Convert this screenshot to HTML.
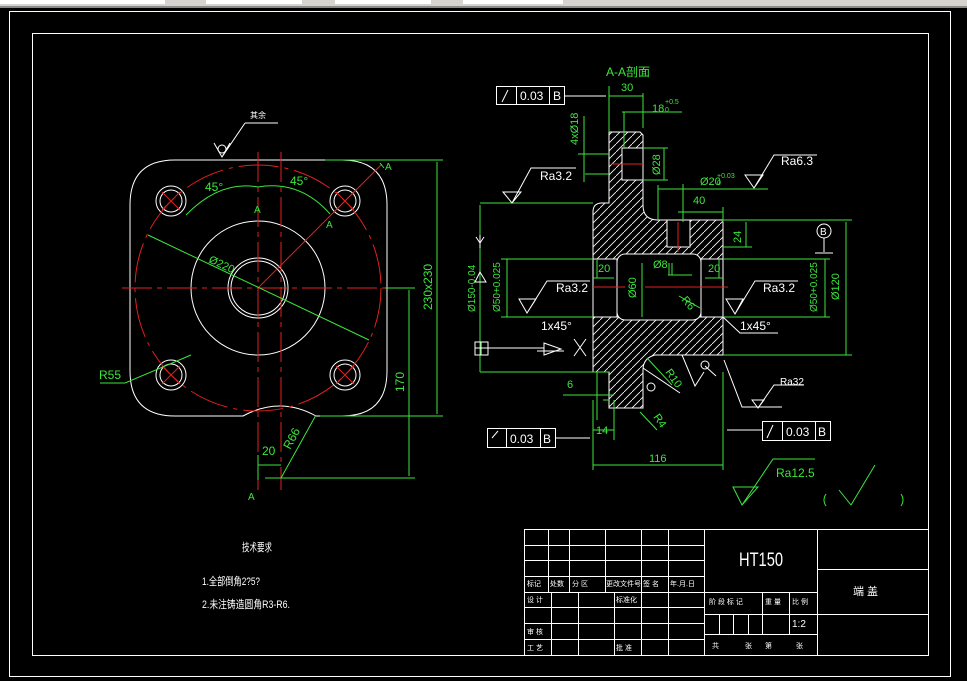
<!DOCTYPE html>
<html><head><meta charset="utf-8"><style>
html,body{margin:0;padding:0;background:#000;width:967px;height:681px;overflow:hidden}
svg{display:block}
text{font-family:"Liberation Sans","Noto Sans CJK SC",sans-serif}
</style></head><body>
<svg width="967" height="681" viewBox="0 0 967 681" xmlns="http://www.w3.org/2000/svg">
<defs>
<pattern id="h" patternUnits="userSpaceOnUse" width="8" height="8"><line x1="-1" y1="9" x2="9" y2="-1" stroke="#fff" stroke-width="0.8"/></pattern>
</defs>
<rect width="967" height="681" fill="#000"/>
<!-- toolbar -->
<rect x="0" y="0" width="967" height="7" fill="#d6d3ce"/>
<rect x="0" y="6" width="967" height="2" fill="#8a8a8a"/>
<rect x="0" y="0" width="165" height="4" fill="#fff"/>
<rect x="206" y="0" width="96" height="4" fill="#fff"/>
<rect x="335" y="0" width="96" height="4" fill="#fff"/>
<rect x="463" y="0" width="100" height="4" fill="#fff"/>
<g fill="none" stroke-width="1" shape-rendering="crispEdges">
<rect x="9.5" y="11.5" width="941" height="665" stroke="#fff"/>
<rect x="32.5" y="33.5" width="896" height="622" stroke="#fff"/>
<!-- title block -->
<g stroke="#fff">
<rect x="524.5" y="529.5" width="404" height="126"/>
<line x1="704.5" y1="529" x2="704.5" y2="655"/><line x1="817.5" y1="529" x2="817.5" y2="655"/>
<line x1="524" y1="545.5" x2="704" y2="545.5"/><line x1="524" y1="560.5" x2="704" y2="560.5"/>
<line x1="524" y1="576.5" x2="704" y2="576.5"/><line x1="524" y1="592.5" x2="817" y2="592.5"/>
<line x1="524" y1="607.5" x2="704" y2="607.5"/><line x1="524" y1="623.5" x2="704" y2="623.5"/>
<line x1="524" y1="639.5" x2="704" y2="639.5"/>
<line x1="548.5" y1="529" x2="548.5" y2="592"/><line x1="569.5" y1="529" x2="569.5" y2="592"/>
<line x1="605.5" y1="529" x2="605.5" y2="592"/><line x1="641.5" y1="529" x2="641.5" y2="655"/>
<line x1="668.5" y1="529" x2="668.5" y2="655"/>
<line x1="551.5" y1="592" x2="551.5" y2="655"/><line x1="578.5" y1="592" x2="578.5" y2="655"/>
<line x1="614.5" y1="592" x2="614.5" y2="655"/>
<line x1="704" y1="614.5" x2="817" y2="614.5"/><line x1="704" y1="634.5" x2="817" y2="634.5"/>
<line x1="762.5" y1="592" x2="762.5" y2="634"/><line x1="789.5" y1="592" x2="789.5" y2="634"/>
<line x1="719.5" y1="614" x2="719.5" y2="634"/><line x1="733.5" y1="614" x2="733.5" y2="634"/><line x1="748.5" y1="614" x2="748.5" y2="634"/>
<line x1="817" y1="569.5" x2="928" y2="569.5"/><line x1="817" y1="614.5" x2="928" y2="614.5"/>
</g>
</g>
<g fill="#fff" font-size="7">
<text x="527" y="586">标记</text><text x="550" y="586">处数</text><text x="572" y="586">分 区</text><text x="606" y="586">更改文件号</text><text x="643" y="586">签 名</text><text x="670" y="586">年.月.日</text>
<text x="527" y="602">设 计</text><text x="616" y="602">标准化</text><text x="527" y="634">审 核</text><text x="527" y="650">工 艺</text><text x="616" y="650">批 准</text>
<text x="709" y="604">阶 段 标 记</text><text x="765" y="604">重 量</text><text x="792" y="604">比 例</text>
<text x="712" y="648">共</text><text x="745" y="648">张</text><text x="765" y="648">第</text><text x="796" y="648">张</text>
<text x="792" y="627" font-size="10">1:2</text>
<text x="853" y="595" font-size="11">端 盖</text>
</g>
<text x="739" y="566" fill="#fff" font-size="19" textLength="44" lengthAdjust="spacingAndGlyphs">HT150</text>
<g fill="#fff" font-size="11">
<text x="242" y="551" textLength="30" lengthAdjust="spacingAndGlyphs">技术要求</text>
<text x="202" y="585" textLength="58" lengthAdjust="spacingAndGlyphs">1.全部倒角2?5?</text>
<text x="202" y="608" textLength="88" lengthAdjust="spacingAndGlyphs">2.未注铸造圆角R3-R6.</text>
</g>

<!-- LEFT VIEW -->
<g fill="none" stroke="#fff" stroke-width="1">
<path d="M175,160 L342,160 Q387,160 387,205 L387,371 Q387,416 342,416 L316,416 Q280,396 243,416 L175,416 Q130,416 130,371 L130,205 Q130,160 175,160 Z"/>
<circle cx="258" cy="288" r="67"/><circle cx="258" cy="288" r="30"/><circle cx="258" cy="288" r="27"/>
<circle cx="171" cy="201" r="15"/><circle cx="171" cy="201" r="11"/>
<circle cx="345" cy="201" r="15"/><circle cx="345" cy="201" r="11"/>
<circle cx="171" cy="375" r="15"/><circle cx="171" cy="375" r="11"/>
<circle cx="345" cy="375" r="15"/><circle cx="345" cy="375" r="11"/>
<path d="M245,123 L278,123 M245,123 L222,157 M214,143 L222,157 L230,143"/><circle cx="222" cy="149" r="4"/>
</g>
<text x="250" y="118" fill="#fff" font-size="8">其余</text>
<g fill="none" stroke="#e02020" stroke-width="1">
<circle cx="258" cy="288" r="123" stroke-dasharray="40 6 4 6"/>
<path d="M122,288 L385,288 M258,152 L258,490 M281,152 L281,490" stroke-dasharray="30 5 5 5"/>
<path d="M162,192 L180,210 M180,192 L162,210 M336,192 L354,210 M354,192 L336,210 M162,366 L180,384 M180,366 L162,384 M336,366 L354,384 M354,366 L336,384"/>
<path d="M258,288 L382,164"/>
</g>
<g fill="none" stroke="#3ce63c" stroke-width="1">
<path d="M325,160 L443,160 M437,162 L437,414 M320,416 L443,416 M385,288 L415,288 M409,290 L409,476 M265,478 L415,478"/>
<path d="M148,235 L369,340 M125,383 L191,355 M100,383 L125,383 M316,415 L281,478 M258,455 L258,480 M258,465 L281,465"/>
<path d="M186,215 Q220,180 258,187 Q300,180 330,214"/>
<path d="M380,163 L384,168"/>
</g>
<g fill="#3ce63c" font-size="12">
<text x="205" y="191">45°</text><text x="290" y="185">45°</text>
<text x="254" y="213" font-size="10">A</text><text x="326" y="228" font-size="10">A</text><text x="385" y="170" font-size="10">A</text>
<text x="248" y="500" font-size="10">A</text>
<text x="208" y="262" transform="rotate(25 208 262)" font-size="11">Ø220</text>
<text x="99" y="379">R55</text><text x="262" y="455">20</text>
<text x="290" y="450" transform="rotate(-62 290 450)">R66</text>
<text x="432" y="310" transform="rotate(-90 432 310)" font-size="12">230x230</text>
<text x="404" y="392" transform="rotate(-90 404 392)">170</text>
</g>

<!-- RIGHT SECTION -->
<path fill="url(#h)" fill-rule="evenodd" stroke="#fff" stroke-width="1" d="M609,132 L640,132 L643,135 L643,205 Q643,220 658,220 L723,220 L723,355 L655,355 Q643,358 643,370 L643,408 L609,408 L609,372 L593,372 L593,212 Q593,203 602,203 L609,203 Z M622,148 L643,148 L643,180 L622,180 Z M667,220 L690,220 L690,247 L667,247 Z M593,259 L723,259 L723,317 L593,317 Z"/>
<rect x="617" y="254" width="84" height="66" rx="8" fill="#000" stroke="#fff"/>
<g fill="none" stroke="#fff" stroke-width="1">
<path d="M609,132 L609,203 M593,259 L593,317 M723,259 L723,317 M617,259 L617,317 M701,259 L701,317"/>
</g>
<g stroke="#e02020" stroke-width="1"><path d="M611,164 L643,164 M593,287 L625,287 M645,287 L728,287 M678,222 L678,252"/></g>
<g fill="none" stroke="#3ce63c" stroke-width="1">
<path d="M609,86 L609,132 M643,93 L643,128 M609,96 L643,96 M622,112 L682,112 M624,112 L624,148"/>
<path d="M584,116 L584,182 M578,154 L609,154 M585,174 L609,174 M664,148 L664,180 M643,148 L668,148 M643,180 L668,180"/>
<path d="M658,185 L658,220 M683,184 L683,222 M678,212 L723,212 M723,207 L723,222 M658,189 L768,189"/>
<path d="M723,220 L852,220 M723,247 L752,247 M746,222 L746,247 M723,259 L830,259 M723,317 L830,317 M825,259 L825,317 M723,355 L852,355 M846,222 L846,355"/>
<path d="M480,203 L593,203 M480,372 L609,372 M480,205 L480,372 M501,259 L593,259 M501,317 L593,317 M507,259 L507,317"/>
<path d="M597,259 L597,278 M593,278 L614,278 M705,278 L723,278 M719,259 L719,278 M642,263 L642,317 M669,263 L669,275 M672,263 L672,275 M668,275 L692,275"/>
<path d="M597,372 L597,420 M563,395 L614,395 M603,400 L609,400 M614,400 L614,440 M593,430 L614,430 M593,400 L593,470 M723,372 L723,470 M593,465 L723,465"/>
<path d="M647,358 L672,385 M640,412 L657,430 M679,296 L700,308"/>
<path d="M733,487 L742,505 L758,487 Z M742,505 L773,459 L815,459 M851,505 L875,465 M839,490 L851,505"/>
<path d="M826,494 Q822,500 826,506 M901,494 Q905,500 901,506"/>
</g>
<g fill="#3ce63c" font-size="11">
<text x="606" y="76" font-size="12">A-A剖面</text>
<text x="621" y="91">30</text><text x="652" y="112">18</text><text x="665" y="104" font-size="7">+0.5</text><text x="665" y="112" font-size="7">0</text>
<text x="578" y="145" transform="rotate(-90 578 145)">4xØ18</text>
<text x="660" y="175" transform="rotate(-90 660 175)">Ø28</text>
<text x="700" y="185">Ø20</text><text x="717" y="178" font-size="7">+0.03</text><text x="717" y="185" font-size="7">0</text>
<text x="693" y="204">40</text><text x="741" y="243" transform="rotate(-90 741 243)">24</text>
<text x="598" y="272">20</text><text x="708" y="272">20</text><text x="653" y="268">Ø8</text>
<text x="636" y="298" transform="rotate(-90 636 298)">Ø60</text>
<text x="681" y="300" transform="rotate(50 681 300)">R6</text>
<text x="500" y="312" transform="rotate(-90 500 312)" font-size="10">Ø50+0.025</text>
<text x="475" y="312" transform="rotate(-90 475 312)" font-size="10">Ø150-0.04</text>
<text x="817" y="312" transform="rotate(-90 817 312)" font-size="10">Ø50+0.025</text>
<text x="839" y="300" transform="rotate(-90 839 300)">Ø120</text>
<text x="567" y="388">6</text><text x="596" y="434">14</text><text x="649" y="462">116</text>
<text x="665" y="372" transform="rotate(55 665 372)">R10</text>
<text x="653" y="417" transform="rotate(55 653 417)">R4</text>
<text x="776" y="477" font-size="12">Ra12.5</text>
</g>
<!-- white annotations right -->
<g fill="none" stroke="#fff" stroke-width="1">
<rect x="496.5" y="86.5" width="68" height="18"/><path d="M516.5,86 L516.5,104 M549.5,86 L549.5,104 M565,96 L606,96"/>
<rect x="487.5" y="428.5" width="68" height="19"/><path d="M506.5,428 L506.5,448 M540.5,428 L540.5,448 M556,438 L590,438"/>
<rect x="762.5" y="421.5" width="68" height="19"/><path d="M782.5,421 L782.5,441 M815.5,421 L815.5,441 M727,430 L762,430"/>
<path d="M502,102 L508,90 M492,438 L498,431 M767,438 L773,425"/>
<path d="M503,192 L512,203 L521,192 Z M512,203 L531,168 L576,168"/>
<path d="M745,175 L754,188 L763,175 Z M754,188 L774,155 L817,155"/>
<path d="M519,299 L527,313 L536,299 Z M527,313 L547,281 L590,281"/>
<path d="M726,299 L735,314 L743,299 Z M735,314 L755,281 L798,281 M723,317 L740,333 L778,333"/>
<path d="M537,351 L564,351 M544,343 L561,349 L544,355 Z M574,339 L586,356 M586,339 L574,356"/>
<path d="M475,342 L488,342 L488,355 L475,355 Z M481,342 L481,355 M475,348 L488,348 M488,348 L544,348"/>
<path d="M480,248 L480,235 M476,237 L480,243 L484,237 M480,272 L475,282 L486,282 Z"/>
<circle cx="824" cy="231" r="7"/><path d="M824,238 L824,252 M815,253 L833,253"/>
<path d="M682,355 L695,386 L704,372 M705,366 L716,376 M724,360 L742,407 L782,407"/>
<circle cx="705" cy="365" r="4"/>
<path d="M752,400 L758,408 L764,400 Z M758,408 L774,385 L804,385"/>
<path d="M643,368 L680,393"/><circle cx="651" cy="387" r="4"/>
</g>
<g fill="#fff" font-size="12">
<text x="520" y="100">0.03</text><text x="553" y="100">B</text>
<text x="510" y="443">0.03</text><text x="543" y="443">B</text>
<text x="786" y="436">0.03</text><text x="818" y="436">B</text>
<text x="540" y="180">Ra3.2</text><text x="781" y="165">Ra6.3</text>
<text x="556" y="292">Ra3.2</text><text x="763" y="292">Ra3.2</text>
<text x="541" y="330">1x45°</text><text x="740" y="330">1x45°</text>
<text x="780" y="385" font-size="10">Ra32</text>
<text x="820" y="235" font-size="10">B</text>
</g>
</svg>
</body></html>
